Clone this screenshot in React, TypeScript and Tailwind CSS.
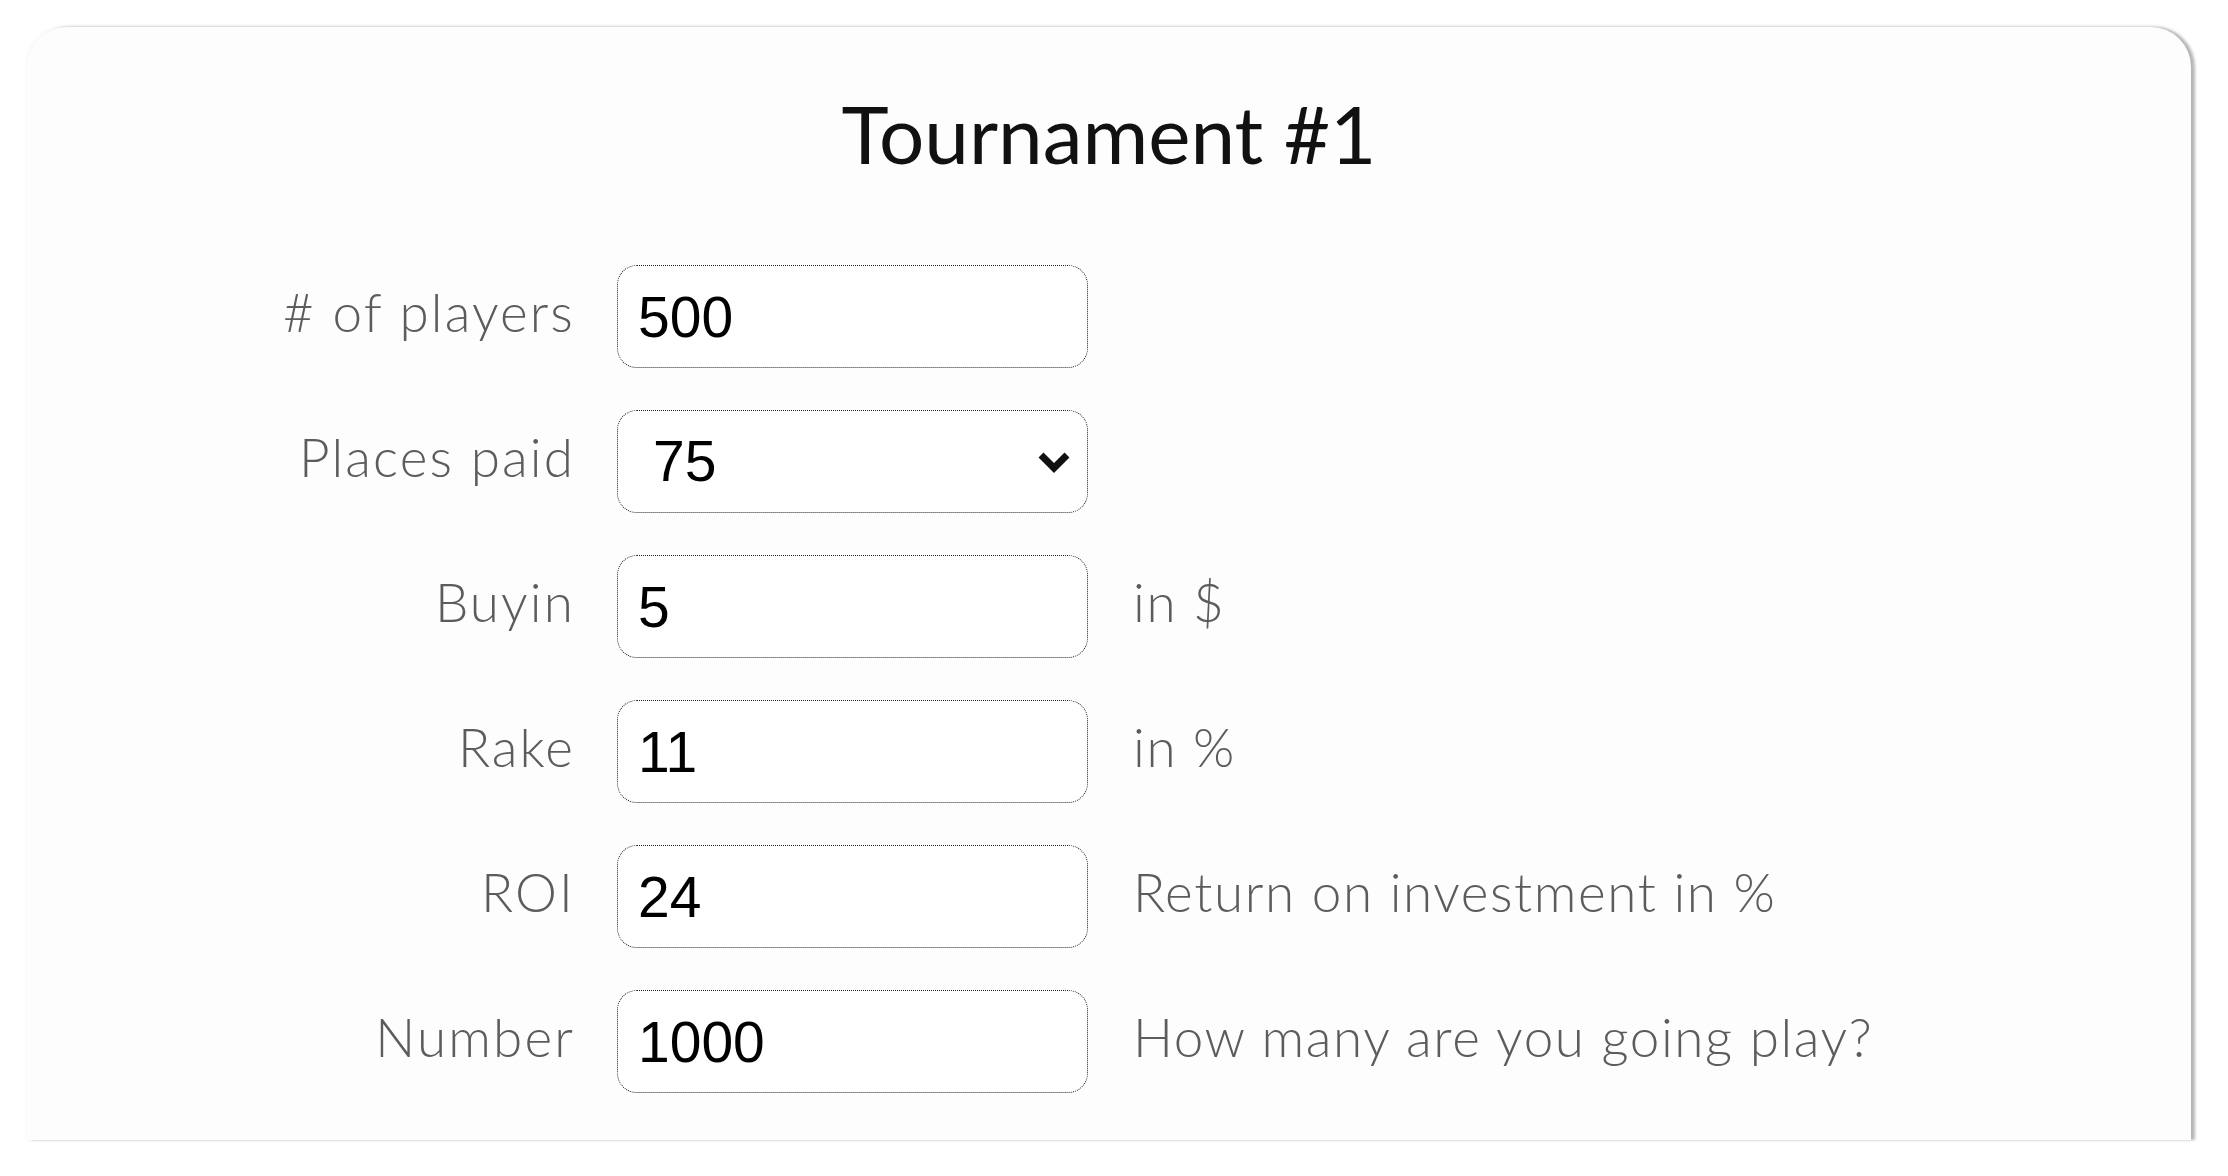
import React, { useState } from 'react';

const Row = ({ label, suffix, children }: { label: string; suffix?: string; children: React.ReactNode }) => (
  <>
    <label className="flex h-[103px] items-center justify-end pb-[11px] font-['Lato','Open_Sans',sans-serif] text-[53px] font-light leading-none tracking-[0.04em] text-[#5c5c5c]">
      {label}
    </label>
    <div className="h-[103px]">{children}</div>
    <div className="flex h-[103px] items-center pb-[11px] pl-[3px] font-['Lato','Open_Sans',sans-serif] text-[53px] font-light leading-none tracking-[0.03em] text-[#5c5c5c]">
      {suffix}
    </div>
  </>
);

const inputClass =
  "h-full w-full rounded-[20px] border border-dotted border-[#222] bg-white pl-[20px] font-['Liberation_Sans',Arial,sans-serif] text-[57px] leading-none text-black outline-none";

const App = () => {
  const [players, setPlayers] = useState('500')
  const [paid, setPaid] = useState('75')
  const [buyin, setBuyin] = useState('5')
  const [rake, setRake] = useState('11')
  const [roi, setRoi] = useState('24')
  const [number, setNumber] = useState('1000')

  return (
    <div className="h-[1176px] overflow-hidden bg-white pl-[27px] pt-[27px]">
      <div className="flex h-[1113px] w-[2164px] flex-col rounded-t-[40px] bg-[#fdfdfd] pt-[66px] shadow-[4px_0_3px_rgba(0,0,0,0.28),0_-1px_4px_rgba(0,0,0,0.05)]">
        <h1 className="text-center font-['Lato','Open_Sans',sans-serif] text-[80px] font-normal leading-none text-[#111]">
          Tournament #1
        </h1>

        <form className="mt-[92px] grid grid-cols-[300px_471px_1fr] gap-x-[42px] gap-y-[42px] pl-[248px]">
          <Row label="# of players">
            <input type="text" value={players} onChange={(e) => setPlayers(e.target.value)} className={inputClass} />
          </Row>
          <Row label="Places paid">
            <div className="relative h-full w-full">
              <select
                value={paid}
                onChange={(e) => setPaid(e.target.value)}
                className="h-full w-full appearance-none rounded-[20px] border border-dotted border-[#222] bg-white pl-[35px] font-['Liberation_Sans',Arial,sans-serif] text-[57px] leading-none text-black outline-none"
              >
                <option value="50">50</option>
                <option value="75">75</option>
                <option value="100">100</option>
              </select>
              <svg className="pointer-events-none absolute right-[17px] top-[41px] h-[22px] w-[34px]" viewBox="0 0 34 22">
                <path d="M4 4 L17 17 L30 4" fill="none" stroke="#111" strokeWidth="7" />
              </svg>
            </div>
          </Row>
          <Row label="Buyin" suffix="in $">
            <input type="text" value={buyin} onChange={(e) => setBuyin(e.target.value)} className={inputClass} />
          </Row>
          <Row label="Rake" suffix="in %">
            <input type="text" value={rake} onChange={(e) => setRake(e.target.value)} className={inputClass} />
          </Row>
          <Row label="ROI" suffix="Return on investment in %">
            <input type="text" value={roi} onChange={(e) => setRoi(e.target.value)} className={inputClass} />
          </Row>
          <Row label="Number" suffix="How many are you going play?">
            <input type="text" value={number} onChange={(e) => setNumber(e.target.value)} className={inputClass} />
          </Row>
        </form>
      </div>
    </div>
  );
};

export default App;
